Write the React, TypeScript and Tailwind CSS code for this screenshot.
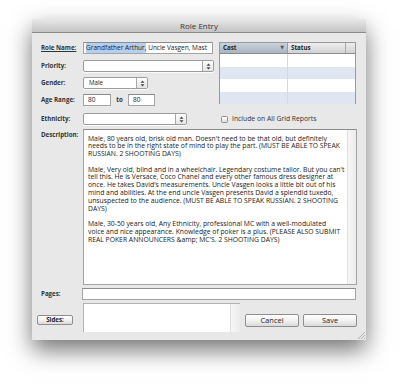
import { ReactNode } from "react";

// line breaks follow the reference textarea
const paragraphs = [
  [
    "Male, 80 years old, brisk old man. Doesn't need to be that old, but definitely",
    "needs to be in the right state of mind to play the part. (MUST BE ABLE TO SPEAK",
    "RUSSIAN. 2 SHOOTING DAYS)",
  ],
  [
    "Male, Very old, blind and in a wheelchair. Legendary costume tailor. But you can't",
    "tell this. He is Versace, Coco Chanel and every other famous dress designer at",
    "once. He takes David's measurements. Uncle Vasgen looks a little bit out of his",
    "mind and abilities. At the end uncle Vasgen presents David a splendid tuxedo,",
    "unsuspected to the audience. (MUST BE ABLE TO SPEAK RUSSIAN. 2 SHOOTING",
    "DAYS)",
  ],
  [
    "Male, 30-50 years old, Any Ethnicity, professional MC with a well-modulated",
    "voice and nice appearance. Knowledge of poker is a plus. (PLEASE ALSO SUBMIT",
    "REAL POKER ANNOUNCERS &amp; MC'S. 2 SHOOTING DAYS)",
  ],
];

function Label({ children }: { children: ReactNode }) {
  return (
    <div className="w-[42px] shrink-0 text-[6.2px] font-bold text-[#333] leading-[12px]">
      {children}
    </div>
  );
}

function Stepper() {
  return (
    <div className="flex h-full w-[11px] flex-col items-center justify-center border-l border-[#a8a8a8] bg-gradient-to-b from-white to-[#e4e4e4]">
      <svg width="5" height="7" viewBox="0 0 5 7">
        <path d="M2.5 0.5 L4.5 2.8 L0.5 2.8 Z" fill="#444" />
        <path d="M2.5 6.5 L4.5 4.2 L0.5 4.2 Z" fill="#444" />
      </svg>
    </div>
  );
}

function Select({ width, value }: { width: string; value?: string }) {
  return (
    <div
      className={`flex h-[12px] ${width} items-center overflow-hidden rounded-[2px] border border-[#9c9c9c] bg-white shadow-[0_1px_0_rgba(255,255,255,0.8)]`}
    >
      <div className="flex-1 pl-[5px] text-[6.2px] text-[#222]">{value}</div>
      <Stepper />
    </div>
  );
}

function Field({ className, children }: { className: string; children?: ReactNode }) {
  return (
    <div
      className={`flex h-[12px] items-center overflow-hidden whitespace-nowrap border border-[#a4a4a4] border-t-[#8c8c8c] bg-white pl-[2px] text-[6.5px] text-[#222] ${className}`}
    >
      {children}
    </div>
  );
}

function Button({ className, children }: { className: string; children: ReactNode }) {
  return (
    <div
      className={`flex items-center justify-center rounded-[2px] border border-[#8f8f8f] bg-gradient-to-b from-white via-[#f2f2f2] to-[#dadada] text-[#222] ${className}`}
    >
      {children}
    </div>
  );
}

export default function App() {
  return (
    <div
      className="h-[387px] w-[400px] overflow-hidden bg-white"
      style={{ fontFamily: '"Open Sans", "DejaVu Sans", sans-serif' }}
    >
      <div className="ml-[32px] mt-[19px] flex h-[321px] w-[334px] flex-col bg-[#e8e8e8] shadow-[0_10px_22px_rgba(0,0,0,0.55)]">
        {/* Title bar */}
        <div className="flex h-[14px] items-center justify-center border-b border-[#8a8a8a] bg-gradient-to-b from-[#e8e8e8] to-[#c4c4c4] text-[8px] text-[#333]">
          Role Entry
        </div>

        <div className="relative flex flex-1 flex-col px-[9px] pt-[9px]">
          {/* Top section */}
          <div className="flex">
            <div className="flex w-[173px] flex-col">
              <div className="flex h-[12px]">
                <Label>
                  <span className="underline">Role Name:</span>
                </Label>
                <Field className="w-[130px]">
                  <span className="bg-[#b4cff0]">Grandfather Arthur,</span>
                  <span>&nbsp;Uncle Vasgen, Mast</span>
                </Field>
              </div>
              <div className="mt-[6px] flex h-[12px]">
                <Label>Priority:</Label>
                <Select width="w-[131px]" />
              </div>
              <div className="mt-[5px] flex h-[12px]">
                <Label>Gender:</Label>
                <Select width="w-[65px]" value="Male" />
              </div>
              <div className="mt-[5px] flex h-[12px]">
                <Label>Age Range:</Label>
                <Field className="w-[28px] pl-[4px]">80</Field>
                <div className="w-[17px] text-center text-[6.2px] font-bold leading-[12px] text-[#333]">to</div>
                <Field className="w-[27px] pl-[4px]">80</Field>
              </div>
              <div className="mt-[7px] flex h-[12px]">
                <Label>Ethnicity:</Label>
                <Select width="w-[104px]" />
              </div>
            </div>

            <div className="ml-[5px] flex flex-col">
              {/* Grid */}
              <div className="h-[62px] w-[137px] border border-[#9a9a9a] bg-white">
                <div className="flex h-[11px] border-b border-[#8c8c8c] text-[6.2px] font-bold text-[#222]">
                  <div className="flex w-[68px] items-center justify-between border-r border-[#9a9a9a] bg-gradient-to-b from-[#c9d3dc] to-[#a8b5c1] pl-[3px] pr-[3px]">
                    <span>Cast</span>
                    <span className="text-[5px] text-[#555]">▼</span>
                  </div>
                  <div className="flex w-[58px] items-center border-r border-[#a8a8a8] bg-gradient-to-b from-[#eeeeee] to-[#d2d2d2] pl-[3px]">
                    Status
                  </div>
                  <div className="flex-1 bg-gradient-to-b from-[#eeeeee] to-[#d2d2d2]" />
                </div>
                {[0, 1, 2, 3].map((i) => (
                  <div key={i} className={`flex h-[12.5px] ${i % 2 ? "bg-[#dfe6f1]" : "bg-white"}`}>
                    <div className="w-[68px] border-r border-[#d8d8d8]" />
                    <div className="w-[58px]" />
                  </div>
                ))}
              </div>
              <div className="mt-[10px] flex items-center pl-[2px]">
                <div className="h-[7px] w-[7px] rounded-[1.5px] border border-[#8e8e8e] bg-gradient-to-b from-white to-[#e0e0e0]" />
                <span className="ml-[4px] text-[6.8px] text-[#333]">Include on All Grid Reports</span>
              </div>
            </div>
          </div>

          {/* Description */}
          <div className="mt-[4px] flex">
            <Label>
              <span className="leading-[9px]">Description:</span>
            </Label>
            <div className="flex h-[156px] w-[274px] border border-[#a4a4a4] border-t-[#8c8c8c] bg-white">
              <div className="flex-1 overflow-hidden whitespace-nowrap pl-[4px] pt-[4.5px] text-[6.8px] leading-[7.8px] text-[#222]">
                {paragraphs.map((lines, i) => (
                  <p key={i} className={i ? "mt-[7.8px]" : ""}>
                    {lines.map((l, j) => (
                      <span key={j} className="block">
                        {l}
                      </span>
                    ))}
                  </p>
                ))}
              </div>
              <div className="w-[9px] border-l border-[#e0e0e0] bg-gradient-to-r from-[#f6f6f6] to-[#ececec]" />
            </div>
          </div>

          {/* Pages */}
          <div className="mt-[3px] flex h-[12px]">
            <Label>Pages:</Label>
            <Field className="-ml-[1px] w-[274px]" />
          </div>

          {/* Sides + buttons */}
          <div className="mt-[3px] flex">
            <div className="w-[42px] shrink-0 pt-[12px]">
              <Button className="-ml-[4px] h-[10px] w-[36px] text-[6.2px] font-bold">Sides:</Button>
            </div>
            <div className="flex h-[29px] w-[157px] border-l border-t border-[#b0b0b0] bg-white">
              <div className="flex-1" />
              <div className="w-[10px] border-l border-[#e0e0e0] bg-gradient-to-r from-[#f6f6f6] to-[#ececec]" />
            </div>
            <Button className="ml-[5px] mt-[11px] h-[13px] w-[54px] text-[7.5px]">Cancel</Button>
            <Button className="ml-[4px] mt-[11px] h-[13px] w-[54px] text-[7.5px]">Save</Button>
          </div>

          {/* Resize grip */}
          <svg className="absolute bottom-[1px] right-[1px]" width="8" height="8" viewBox="0 0 8 8">
            <path d="M1 8 L8 1 M4 8 L8 4 M7 8 L8 7" stroke="#a0a0a0" strokeWidth="0.8" />
          </svg>
        </div>
      </div>
    </div>
  );
}
